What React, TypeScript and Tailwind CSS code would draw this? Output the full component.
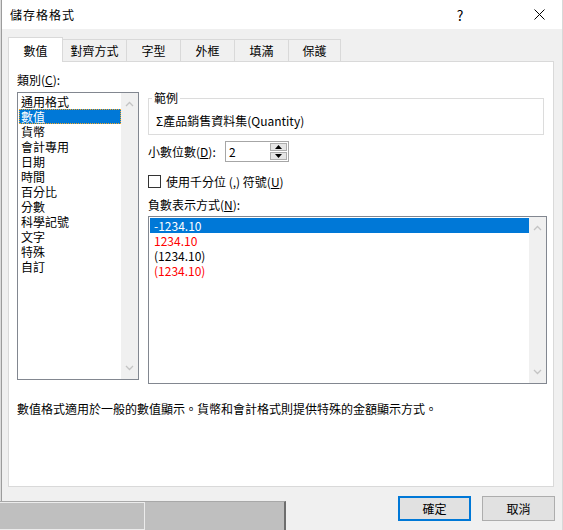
import React from "react";

const categories = [
  "通用格式",
  "數值",
  "貨幣",
  "會計專用",
  "日期",
  "時間",
  "百分比",
  "分數",
  "科學記號",
  "文字",
  "特殊",
  "自訂",
];

const negatives = [
  { text: "-1234.10", red: false },
  { text: "1234.10", red: true },
  { text: "(1234.10)", red: false },
  { text: "(1234.10)", red: true },
];

const tabs = [
  { label: "對齊方式", w: "w-[64px]" },
  { label: "字型", w: "w-[54px]" },
  { label: "外框", w: "w-[54px]" },
  { label: "填滿", w: "w-[54px]" },
  { label: "保護", w: "w-[52px]" },
];

function Chevron({ up }: { up?: boolean }) {
  return (
    <svg width="9" height="6" viewBox="0 0 9 6" className="text-[#c4c4c4]">
      <path
        d={up ? "M1 5 L4.5 1.5 L8 5" : "M1 1 L4.5 4.5 L8 1"}
        fill="none"
        stroke="currentColor"
        strokeWidth="1.3"
      />
    </svg>
  );
}

function ScrollTrack() {
  return (
    <div className="flex w-[17px] shrink-0 flex-col items-center justify-between bg-[#f0f0f0] py-[8px]">
      <Chevron up />
      <Chevron />
    </div>
  );
}

export default function App() {
  return (
    <div className="relative flex h-[530px] w-[563px] overflow-hidden bg-[#f0f0f0] font-['Noto_Sans_CJK_TC','Noto_Sans',sans-serif] text-[12px] leading-[16px] text-black">
      <div className="w-px shrink-0 bg-[#dcdcdc]" />
      <div className="flex w-[562px] flex-col border-x border-l-[#9c9c9c] border-r-[#d8d8d8]">
        {/* title bar */}
        <div className="flex h-[29px] shrink-0 items-center bg-white pl-[8px]">
          <span className="tracking-[1px]">儲存格格式</span>
          <div className="ml-auto flex h-full w-[46px] items-center justify-center text-[14px]">?</div>
          <div className="w-[34px]" />
          <div className="flex h-full w-[45px] items-center justify-center">
            <svg width="11" height="11" viewBox="0 0 11 11">
              <path d="M0.5 0.5 L10.5 10.5 M10.5 0.5 L0.5 10.5" stroke="#000" strokeWidth="1" />
            </svg>
          </div>
        </div>

        {/* tabs */}
        <div className="mt-[8px] flex h-[24px] items-end pl-[6px]">
          <div className="relative z-10 -mb-px flex h-[25px] w-[55px] items-center justify-center border border-b-0 border-[#d9d9d9] bg-white pt-[2px]">
            數值
          </div>
          {tabs.map((t) => (
            <div
              key={t.label}
              className={`flex h-[22px] ${t.w} items-center justify-center border border-b-0 border-l-0 border-[#d9d9d9] pt-[1px]`}
            >
              {t.label}
            </div>
          ))}
        </div>

        {/* panel */}
        <div className="ml-[6px] flex h-[426px] w-[546px] shrink-0 flex-col border border-[#d9d9d9] bg-white pl-[8px] pt-[10px]">
          <div className="flex">
            {/* category */}
            <div className="flex w-[122px] flex-col">
              <div>
                類別(<u>C</u>):
              </div>
              <div className="mt-[4px] flex h-[288px] border border-[#828790]">
                <div className="flex flex-1 flex-col pt-px">
                  {categories.map((c) =>
                    c === "數值" ? (
                      <div
                        key={c}
                        className="ml-px h-[15px] bg-[#0078d7] pl-[2px] leading-[15px] text-white outline-1 -outline-offset-1 outline-dotted outline-[#f5a623]"
                      >
                        {c}
                      </div>
                    ) : (
                      <div key={c} className="h-[15px] pl-[3px] leading-[15px]">
                        {c}
                      </div>
                    )
                  )}
                </div>
                <ScrollTrack />
              </div>
            </div>

            {/* right column */}
            <div className="ml-[9px] flex w-[398px] flex-col">
              <div className="relative mt-[26px] h-[37px] w-[396px] border border-[#dcdcdc] pl-[7px] pt-[14px]">
                <span className="absolute left-[3px] top-[-9px] bg-white px-[2px]">範例</span>
                Σ產品銷售資料集(Quantity)
              </div>

              <div className="mt-[6px] flex h-[21px] items-center">
                <div className="w-[77px]">
                  小數位數(<u>D</u>):
                </div>
                <div className="flex h-[21px] w-[64px] border border-[#a6a6a6]">
                  <div className="flex-1 pl-[3px] leading-[19px]">2</div>
                  <div className="my-px mr-px flex w-[17px] flex-col gap-px">
                    <div className="flex flex-1 items-center justify-center border border-[#adadad] bg-[#e5e5e5]">
                      <svg width="7" height="4" viewBox="0 0 7 4">
                        <path d="M0 4 L3.5 0 L7 4 Z" fill="#000" />
                      </svg>
                    </div>
                    <div className="flex flex-1 items-center justify-center border border-[#adadad] bg-[#e5e5e5]">
                      <svg width="7" height="4" viewBox="0 0 7 4">
                        <path d="M0 0 L3.5 4 L7 0 Z" fill="#000" />
                      </svg>
                    </div>
                  </div>
                </div>
              </div>

              <div className="mt-[13px] flex h-[13px] items-center">
                <div className="h-[13px] w-[13px] border border-[#333333] bg-white" />
                <span className="ml-[5px]">
                  使用千分位 (,) 符號(<u>U</u>)
                </span>
              </div>

              <div className="mt-[9px]">
                負數表示方式(<u>N</u>):
              </div>
              <div className="mt-[3px] flex h-[168px] w-[399px] border border-[#828790]">
                <div className="flex flex-1 flex-col pt-px">
                  {negatives.map((n, i) =>
                    i === 0 ? (
                      <div key={i} className="ml-px h-[15px] bg-[#0078d7] pl-[4px] leading-[15px] text-white">
                        {n.text}
                      </div>
                    ) : (
                      <div
                        key={i}
                        className={`h-[15px] pl-[5px] leading-[15px] ${n.red ? "text-[#ff0000]" : "text-black"}`}
                      >
                        {n.text}
                      </div>
                    )
                  )}
                </div>
                <ScrollTrack />
              </div>
            </div>
          </div>

          <div className="mt-[17px]">
            數值格式適用於一般的數值顯示。貨幣和會計格式則提供特殊的金額顯示方式。
          </div>
        </div>

        {/* buttons */}
        <div className="mr-[7px] mt-[9px] flex justify-end gap-[11px]">
          <button className="h-[25px] w-[73px] border-2 border-[#0078d7] bg-[#e1e1e1]">確定</button>
          <button className="h-[25px] w-[73px] border border-[#adadad] bg-[#e1e1e1]">取消</button>
        </div>
      </div>

      {/* status bar of the window behind, showing over the dialog corner */}
      <div className="absolute left-0 top-[501px] flex h-[29px] w-[286px] border-r-2 border-t border-r-[#6e6e6e] border-t-[#a8a8a8] bg-[#bfbfbf]">
        <div className="h-full w-[145px] border border-[#ececec] border-l-0" />
        <div className="h-full flex-1" />
      </div>
    </div>
  );
}
